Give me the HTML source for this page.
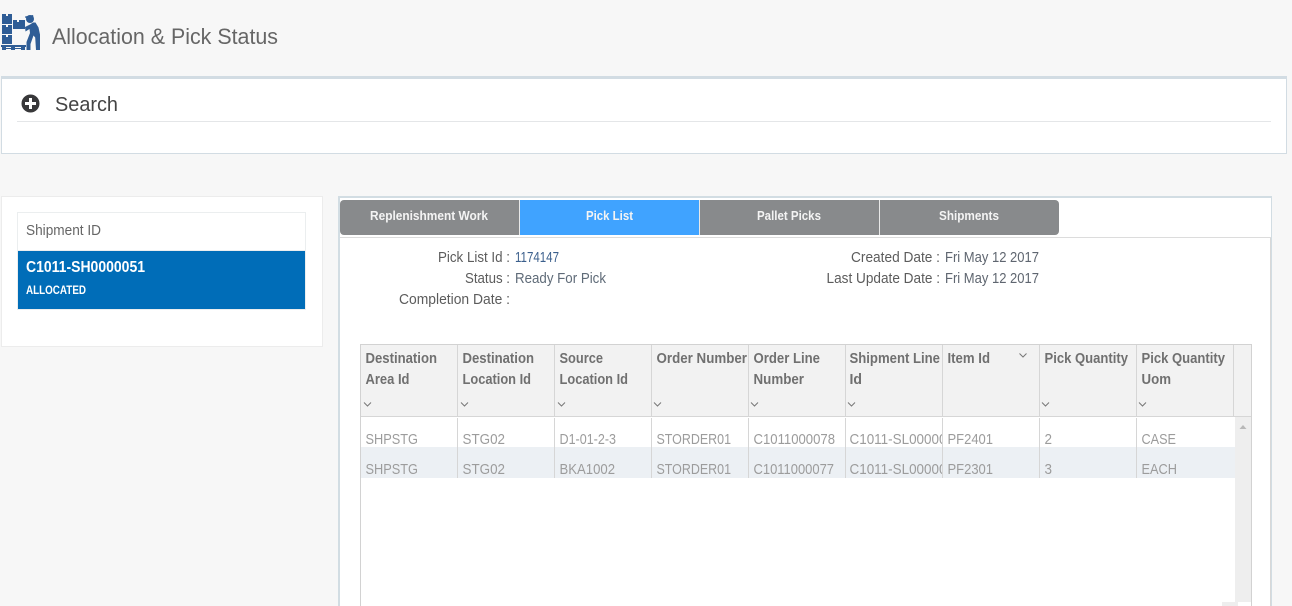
<!DOCTYPE html>
<html><head><meta charset="utf-8"><title>Allocation &amp; Pick Status</title>
<style>
html,body{margin:0;padding:0;background:#f7f7f7;width:1292px;height:606px;overflow:hidden}
svg{position:absolute;left:0;top:0;display:block}
text{font-family:"Liberation Sans",sans-serif}
.h{font-size:14.5px;font-weight:bold;fill:#707070}
.c{font-size:15px;fill:#9c9c9c}
.l{font-size:14.5px;fill:#5c5c5c}
.t{font-size:13px;font-weight:bold;fill:#f4f4f4}
</style></head><body>
<svg width="1292" height="606" viewBox="0 0 1292 606" xmlns="http://www.w3.org/2000/svg" shape-rendering="crispEdges">
<defs><clipPath id="sl"><rect x="845" y="420" width="97" height="60"/></clipPath></defs>
<rect width="1292" height="606" fill="#f7f7f7"/>

<!-- logo -->
<g fill="#2f5d96" shape-rendering="geometricPrecision">
<path d="M2 14h4v2h2v-2h4v10H2zM2 25h4v2h2v-2h4v9H2zM2 35h4v2h2v-2h4v9H2zM13 20h4v2h2v-2h6v9H13z"/>
<path d="M1 45h25v2H1zM2 47h4v3H2zM11 47h4v3h-4zM21 47h4v3h-4zM6 48h15v1H6z"/>
<circle cx="30" cy="19" r="4"/>
<path d="M25 16.500l8-1.500 .5 1.500-8 1.500zM25 27l5-2.500 3-2h2.500l3 5 1.500 7v15.500h-4l-.8-12.500-1.700-2-3 8.500v6h-4v-8l3.500-9-.5-4-4 2.500z"/>
</g>
<text x="52" y="44" font-size="22" fill="#666" textLength="226" lengthAdjust="spacingAndGlyphs">Allocation &amp; Pick Status</text>

<!-- search panel -->
<rect x="1" y="76" width="1286" height="78" fill="#d2dce3"/>
<rect x="2" y="79" width="1284" height="74" fill="#fff"/>
<rect x="17" y="121" width="1254" height="1" fill="#e4e6e8"/>
<circle cx="30.500" cy="103.500" r="9" fill="#38383a" shape-rendering="geometricPrecision"/>
<rect x="25" y="102" width="11" height="3" fill="#fff"/>
<rect x="29" y="98" width="3" height="11" fill="#fff"/>
<text x="55" y="111" font-size="20.500" fill="#444" textLength="63" lengthAdjust="spacingAndGlyphs">Search</text>

<!-- left panel -->
<rect x="1" y="196" width="322" height="151" fill="#ececec"/>
<rect x="2" y="197" width="320" height="149" fill="#fff"/>
<rect x="17" y="212" width="289" height="98" fill="#ebeeef"/>
<rect x="18" y="213" width="287" height="37" fill="#fff"/>
<rect x="18" y="251" width="287" height="58" fill="#006db8"/>
<text x="26" y="235" font-size="14.500" fill="#666" textLength="75" lengthAdjust="spacingAndGlyphs">Shipment ID</text>
<text x="26" y="272" font-size="16" font-weight="bold" fill="#fff" textLength="119" lengthAdjust="spacingAndGlyphs">C1011-SH0000051</text>
<text x="26" y="294" font-size="11.500" font-weight="bold" fill="#fff" textLength="60" lengthAdjust="spacingAndGlyphs">ALLOCATED</text>

<!-- right panel -->
<rect x="338" y="196" width="934" height="410" fill="#d2dde3"/>
<rect x="340" y="198" width="931" height="408" fill="#fff"/>
<rect x="340" y="237" width="931" height="1" fill="#dcdcdc"/>
<rect x="1270" y="238" width="1" height="368" fill="#d8d8d8"/>

<!-- tabs -->
<path d="M344 200H1055a4 4 0 0 1 4 4V231a4 4 0 0 1-4 4H344a4 4 0 0 1-4-4V204a4 4 0 0 1 4-4z" fill="#888a8c" shape-rendering="geometricPrecision"/>
<rect x="519" y="200" width="1" height="35" fill="#e8e8e8"/>
<rect x="520" y="200" width="179" height="35" fill="#40a3ff"/>
<rect x="699" y="200" width="1" height="35" fill="#e8e8e8"/>
<rect x="879" y="200" width="1" height="35" fill="#e8e8e8"/>
<text class="t" x="370" y="220" textLength="118" lengthAdjust="spacingAndGlyphs">Replenishment Work</text>
<text class="t" x="586" y="220" textLength="47" lengthAdjust="spacingAndGlyphs">Pick List</text>
<text class="t" x="757" y="220" textLength="64" lengthAdjust="spacingAndGlyphs">Pallet Picks</text>
<text class="t" x="939" y="220" textLength="60" lengthAdjust="spacingAndGlyphs">Shipments</text>

<!-- details -->
<text class="l" x="438" y="262" textLength="72" lengthAdjust="spacingAndGlyphs">Pick List Id :</text>
<text class="l" x="465" y="283" textLength="45" lengthAdjust="spacingAndGlyphs">Status :</text>
<text class="l" x="399" y="304" textLength="111" lengthAdjust="spacingAndGlyphs">Completion Date :</text>
<text x="515" y="262" font-size="15" fill="#3b5f8c" textLength="44" lengthAdjust="spacingAndGlyphs">1174147</text>
<text x="515" y="283" font-size="14.500" fill="#5f6b78" textLength="91" lengthAdjust="spacingAndGlyphs">Ready For Pick</text>
<text class="l" x="851" y="262" textLength="89" lengthAdjust="spacingAndGlyphs">Created Date :</text>
<text class="l" x="826.500" y="283" textLength="113.500" lengthAdjust="spacingAndGlyphs">Last Update Date :</text>
<text x="945" y="262" font-size="14.500" fill="#5f6670" textLength="94" lengthAdjust="spacingAndGlyphs">Fri May 12 2017</text>
<text x="945" y="283" font-size="14.500" fill="#5f6670" textLength="94" lengthAdjust="spacingAndGlyphs">Fri May 12 2017</text>

<!-- grid -->
<rect x="360" y="344" width="892" height="262" fill="#d2d2d2"/>
<rect x="361" y="345" width="890" height="261" fill="#fff"/>
<rect x="361" y="345" width="890" height="71" fill="#f2f2f2"/>
<rect x="361" y="416" width="890" height="1" fill="#d6d6d6"/>
<rect x="361" y="447" width="874" height="31" fill="#ecf0f4"/>
<rect x="1235" y="417" width="16" height="185" fill="#eeeeee"/>
<rect x="1222" y="602" width="16" height="4" fill="#eeeeee"/>
<path d="M1239.500 429l3.500-4 3.500 4z" fill="#b8b8b8" shape-rendering="geometricPrecision"/>

<g fill="#d6d6d6">
<rect x="457" y="345" width="1" height="71"/><rect x="554" y="345" width="1" height="71"/><rect x="651" y="345" width="1" height="71"/><rect x="748" y="345" width="1" height="71"/><rect x="845" y="345" width="1" height="71"/><rect x="942" y="345" width="1" height="71"/><rect x="1039" y="345" width="1" height="71"/><rect x="1136" y="345" width="1" height="71"/><rect x="1233" y="345" width="1" height="71"/>
<rect x="457" y="418" width="1" height="60"/><rect x="554" y="418" width="1" height="60"/><rect x="651" y="418" width="1" height="60"/><rect x="748" y="418" width="1" height="60"/><rect x="845" y="418" width="1" height="60"/><rect x="942" y="418" width="1" height="60"/><rect x="1039" y="418" width="1" height="60"/><rect x="1136" y="418" width="1" height="60"/>
</g>

<text class="h" x="365.500" y="363" textLength="71.500" lengthAdjust="spacingAndGlyphs">Destination</text>
<text class="h" x="365.500" y="384" textLength="44" lengthAdjust="spacingAndGlyphs">Area Id</text>
<text class="h" x="462.500" y="363" textLength="71.500" lengthAdjust="spacingAndGlyphs">Destination</text>
<text class="h" x="462.500" y="384" textLength="68.500" lengthAdjust="spacingAndGlyphs">Location Id</text>
<text class="h" x="559.500" y="363" textLength="43.500" lengthAdjust="spacingAndGlyphs">Source</text>
<text class="h" x="559.500" y="384" textLength="68.500" lengthAdjust="spacingAndGlyphs">Location Id</text>
<text class="h" x="656.500" y="363" textLength="90.500" lengthAdjust="spacingAndGlyphs">Order Number</text>
<text class="h" x="753.500" y="363" textLength="66.500" lengthAdjust="spacingAndGlyphs">Order Line</text>
<text class="h" x="753.500" y="384" textLength="50.500" lengthAdjust="spacingAndGlyphs">Number</text>
<text class="h" x="849.500" y="363" textLength="90.500" lengthAdjust="spacingAndGlyphs">Shipment Line</text>
<text class="h" x="849.500" y="384" textLength="12.500" lengthAdjust="spacingAndGlyphs">Id</text>
<text class="h" x="947.500" y="363" textLength="42.500" lengthAdjust="spacingAndGlyphs">Item Id</text>
<text class="h" x="1044.500" y="363" textLength="83.500" lengthAdjust="spacingAndGlyphs">Pick Quantity</text>
<text class="h" x="1141.500" y="363" textLength="83.500" lengthAdjust="spacingAndGlyphs">Pick Quantity</text>
<text class="h" x="1141.500" y="384" textLength="29.500" lengthAdjust="spacingAndGlyphs">Uom</text>

<g fill="none" stroke="#777" stroke-width="1" shape-rendering="geometricPrecision">
<path d="M364 402.500l3.500 3.500 3.500-3.500"/><path d="M461 402.500l3.500 3.500 3.500-3.500"/><path d="M558 402.500l3.500 3.500 3.500-3.500"/><path d="M654 402.500l3.500 3.500 3.500-3.500"/><path d="M751 402.500l3.500 3.500 3.500-3.500"/><path d="M848 402.500l3.500 3.500 3.500-3.500"/><path d="M1042 402.500l3.500 3.500 3.500-3.500"/><path d="M1139 402.500l3.500 3.500 3.500-3.500"/>
<path d="M1019.500 353.500l3.500 3.500 3.500-3.500"/>
</g>

<text class="c" x="365.500" y="444" textLength="52.500" lengthAdjust="spacingAndGlyphs">SHPSTG</text>
<text class="c" x="462.500" y="444" textLength="42.500" lengthAdjust="spacingAndGlyphs">STG02</text>
<text class="c" x="559.500" y="444" textLength="56.500" lengthAdjust="spacingAndGlyphs">D1-01-2-3</text>
<text class="c" x="656.500" y="444" textLength="74.500" lengthAdjust="spacingAndGlyphs">STORDER01</text>
<text class="c" x="753.500" y="444" textLength="81.500" lengthAdjust="spacingAndGlyphs">C1011000078</text>
<text class="c" x="849.500" y="444" textLength="97" lengthAdjust="spacingAndGlyphs" clip-path="url(#sl)">C1011-SL00000</text>
<text class="c" x="947.500" y="444" textLength="45.500" lengthAdjust="spacingAndGlyphs">PF2401</text>
<text class="c" x="1044.500" y="444" textLength="7.500" lengthAdjust="spacingAndGlyphs">2</text>
<text class="c" x="1141.500" y="444" textLength="34.500" lengthAdjust="spacingAndGlyphs">CASE</text>

<text class="c" x="365.500" y="474" textLength="52.500" lengthAdjust="spacingAndGlyphs">SHPSTG</text>
<text class="c" x="462.500" y="474" textLength="42.500" lengthAdjust="spacingAndGlyphs">STG02</text>
<text class="c" x="559.500" y="474" textLength="55.500" lengthAdjust="spacingAndGlyphs">BKA1002</text>
<text class="c" x="656.500" y="474" textLength="74.500" lengthAdjust="spacingAndGlyphs">STORDER01</text>
<text class="c" x="753.500" y="474" textLength="80.500" lengthAdjust="spacingAndGlyphs">C1011000077</text>
<text class="c" x="849.500" y="474" textLength="97" lengthAdjust="spacingAndGlyphs" clip-path="url(#sl)">C1011-SL00000</text>
<text class="c" x="947.500" y="474" textLength="45.500" lengthAdjust="spacingAndGlyphs">PF2301</text>
<text class="c" x="1044.500" y="474" textLength="7.500" lengthAdjust="spacingAndGlyphs">3</text>
<text class="c" x="1141.500" y="474" textLength="35.500" lengthAdjust="spacingAndGlyphs">EACH</text>
</svg>
</body></html>
